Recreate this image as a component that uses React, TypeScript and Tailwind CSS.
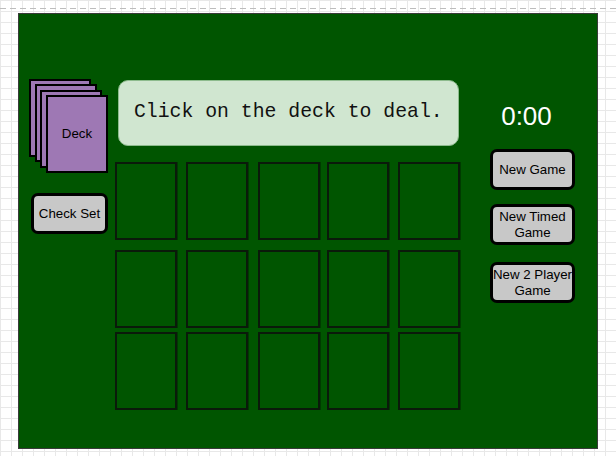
import React from "react";

const sans = { fontFamily: '"Liberation Sans", Arial, sans-serif' };

function Slot({ className }: { className: string }) {
  return (
    <div
      className={
        "h-[78px] w-[62px] shrink-0 border-2 border-[#0a1a0a] shadow-[1px_0_0_#003a00] " +
        className
      }
    />
  );
}

function Row({ className }: { className: string }) {
  return (
    <div className={"flex " + className}>
      <Slot className="" />
      <Slot className="ml-[9px]" />
      <Slot className="ml-[10px]" />
      <Slot className="ml-[7px]" />
      <Slot className="ml-[9px]" />
    </div>
  );
}

function Btn({ children, className }: { children: React.ReactNode; className: string }) {
  return (
    <button
      className={
        "flex items-center justify-center rounded-[7px] border-[3px] border-black bg-[#c8c8c8] text-[13.3px] leading-[16px] text-black text-center " +
        className
      }
      style={sans}
    >
      {children}
    </button>
  );
}

export default function App() {
  return (
    <div className="relative h-[456px] w-[616px] overflow-hidden bg-white bg-[linear-gradient(to_right,#e8e8e8_1px,transparent_1px),linear-gradient(to_bottom,#e8e8e8_1px,transparent_1px)] [background-size:11px_11px] pt-[8px]">
      <div className="h-px w-full bg-[repeating-linear-gradient(to_right,#bdbdbd_0_6px,transparent_6px_10px)]" />
      <div className="ml-[18px] mt-[4px] flex h-[436px] w-[580px] border border-[#3a3a3a] bg-[#005500]">
        {/* left column */}
        <div className="ml-[10px] mt-[65px] flex w-[80px] flex-col">
          <div className="relative h-[94px] w-[78px]">
            <div className="absolute left-0 top-0 h-[78px] w-[62px] border-2 border-black bg-[#9e78b4]" />
            <div className="absolute left-[6px] top-[5px] h-[78px] w-[62px] border-2 border-black bg-[#9e78b4]" />
            <div className="absolute left-[11px] top-[11px] h-[78px] w-[62px] border-2 border-black bg-[#9e78b4]" />
            <div
              className="absolute left-[17px] top-[16px] flex h-[78px] w-[62px] items-center justify-center border-2 border-black bg-[#9e78b4] text-[13.3px] text-black"
              style={sans}
            >
              Deck
            </div>
          </div>
          <Btn className="ml-[2px] mt-[20px] h-[41px] w-[77px]">Check Set</Btn>
        </div>

        {/* center column */}
        <div className="ml-[6px] flex w-[366px] flex-col">
          <div
            className="ml-[3px] mt-[66px] flex h-[66px] w-[341px] items-center rounded-[10px] border border-[#8dbb8d] bg-[#d0e6d0] pl-[15px] text-[19.8px] text-[#111]"
            style={{ fontFamily: '"Liberation Mono", "Courier New", monospace' }}
          >
            Click on the deck to deal.
          </div>
          <Row className="mt-[16px]" />
          <Row className="mt-[10px]" />
          <Row className="mt-[4px]" />
        </div>

        {/* right column */}
        <div className="ml-[9px] flex w-[85px] flex-col">
          <div
            className="mt-[89px] w-[73px] text-center text-[26px] leading-none text-white"
            style={sans}
          >
            0:00
          </div>
          <Btn className="mt-[20px] h-[41px] w-[85px]">New Game</Btn>
          <Btn className="mt-[14px] h-[41px] w-[85px]">
            New Timed
            <br />
            Game
          </Btn>
          <Btn className="mt-[17px] h-[41px] w-[85px] whitespace-nowrap">
            New 2 Player
            <br />
            Game
          </Btn>
        </div>
      </div>
    </div>
  );
}
